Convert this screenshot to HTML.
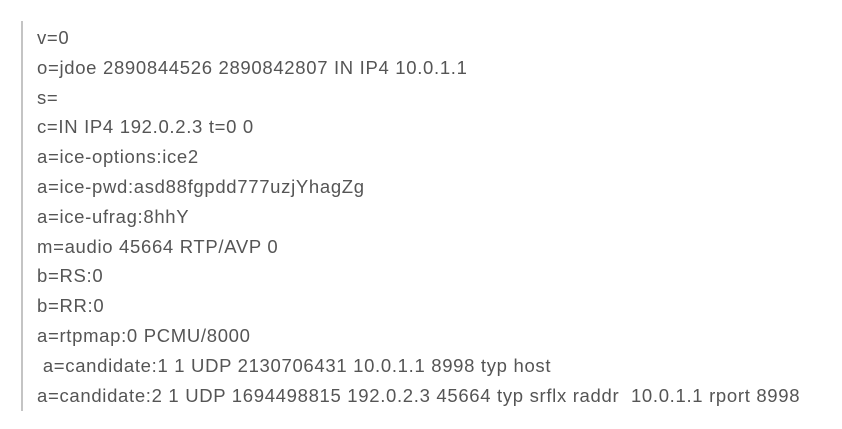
<!DOCTYPE html>
<html><head><meta charset="utf-8"><style>
html,body{margin:0;padding:0;background:#fff;width:842px;height:429px;overflow:hidden}
.q{position:absolute;left:21px;top:21px;height:390px;border-left:2px solid #c4c4c4;}
.t{position:absolute;left:37px;top:23px;font-family:"Liberation Sans",sans-serif;font-size:18.5px;letter-spacing:0.68px;line-height:29.8px;color:#555;white-space:pre;}
</style></head><body>
<div class="q"></div>
<div class="t">v=0
o=jdoe 2890844526 2890842807 IN IP4 10.0.1.1
s=
c=IN IP4 192.0.2.3 t=0 0
a=ice-options:ice2
a=ice-pwd:asd88fgpdd777uzjYhagZg
a=ice-ufrag:8hhY
m=audio 45664 RTP/AVP 0
b=RS:0
b=RR:0
a=rtpmap:0 PCMU/8000
 a=candidate:1 1 UDP 2130706431 10.0.1.1 8998 typ host
a=candidate:2 1 UDP 1694498815 192.0.2.3 45664 typ srflx raddr  10.0.1.1 rport 8998</div>
</body></html>
